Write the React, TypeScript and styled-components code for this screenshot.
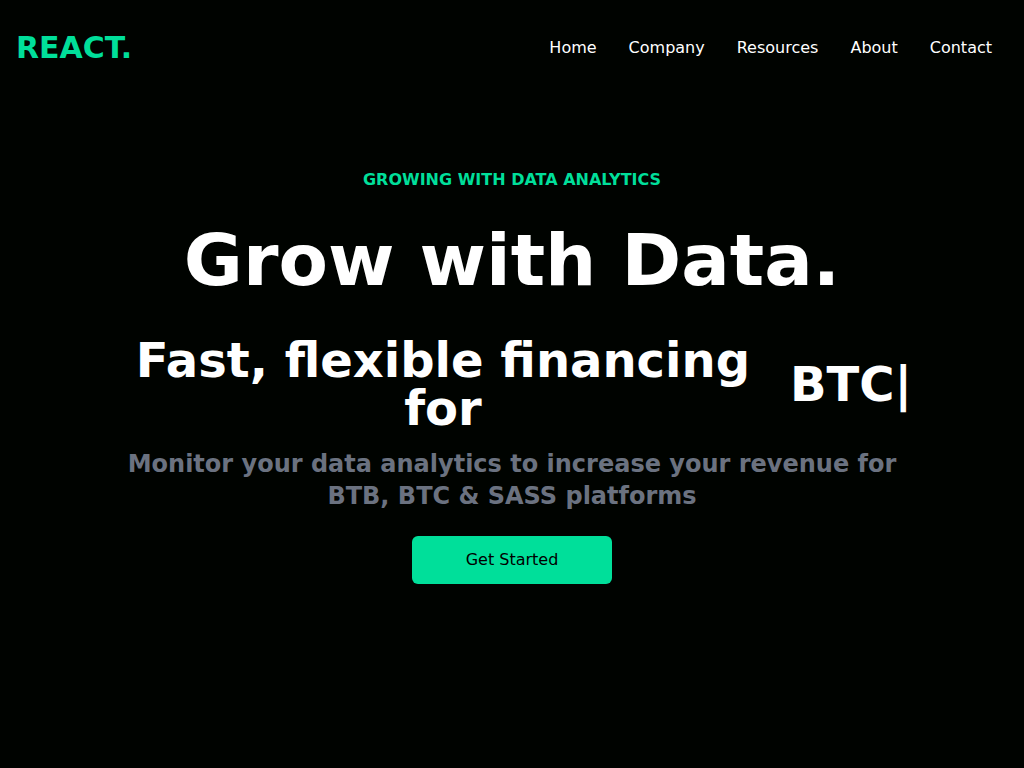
import React from 'react';
import styled, { createGlobalStyle } from 'styled-components';

const GlobalStyle = createGlobalStyle`
  *, *::before, *::after { box-sizing: border-box; }
  body {
    margin: 0;
    background: #000300;
    color: #fff;
    font-family: "DejaVu Sans", sans-serif;
    font-size: 16px;
    line-height: 24px;
  }
  h1, h2, p, ul { margin: 0; padding: 0; }
`;

const Header = styled.header`
  display: flex;
  align-items: center;
  justify-content: space-between;
  height: 96px;
  max-width: 1240px;
  margin: 0 auto;
  padding: 0 16px;
`;

const Logo = styled.a`
  color: #00df9a;
  font-size: 30px;
  line-height: 36px;
  font-weight: 700;
  text-decoration: none;
`;

const NavList = styled.ul`
  display: flex;
  list-style: none;
`;

const NavLink = styled.a`
  display: block;
  padding: 16px;
  color: #fff;
  text-decoration: none;
`;

const Hero = styled.main`
  display: flex;
  flex-direction: column;
  align-items: center;
  max-width: 800px;
  margin: 0 auto;
  padding: 72px 0;
  text-align: center;
`;

const Eyebrow = styled.p`
  padding: 0 8px;
  color: #00df9a;
  font-weight: 700;
`;

const Title = styled.h1`
  padding: 32px 0 24px;
  font-size: 72px;
  line-height: 72px;
  font-weight: 700;
`;

const TaglineRow = styled.div`
  display: flex;
  align-items: center;
  justify-content: center;
`;

const Tagline = styled.p`
  padding: 16px 0;
  font-size: 48px;
  line-height: 48px;
  font-weight: 700;
`;

const Typed = styled.span`
  padding-left: 16px;
  font-size: 48px;
  line-height: 48px;
  font-weight: 700;
  white-space: nowrap;
`;

const Summary = styled.p`
  color: #6b7280;
  font-size: 24px;
  line-height: 32px;
  font-weight: 700;
`;

const StartButton = styled.button`
  width: 200px;
  margin: 24px auto;
  padding: 12px 0;
  border: 0;
  border-radius: 6px;
  background: #00df9a;
  color: #000;
  font: inherit;
  cursor: pointer;
`;

const links = ['Home', 'Company', 'Resources', 'About', 'Contact'];

export default function App() {
  return (
    <>
      <GlobalStyle />
      <Header>
        <Logo href="#">REACT.</Logo>
        <nav>
          <NavList>
            {links.map((label) => (
              <li key={label}>
                <NavLink href={`#${label.toLowerCase()}`}>{label}</NavLink>
              </li>
            ))}
          </NavList>
        </nav>
      </Header>
      <Hero>
        <Eyebrow>GROWING WITH DATA ANALYTICS</Eyebrow>
        <Title>Grow with Data.</Title>
        <TaglineRow>
          <Tagline>Fast, flexible financing for</Tagline>
          <Typed>BTC|</Typed>
        </TaglineRow>
        <Summary>
          Monitor your data analytics to increase your revenue for BTB, BTC &amp; SASS platforms
        </Summary>
        <StartButton type="button">Get Started</StartButton>
      </Hero>
    </>
  );
}
